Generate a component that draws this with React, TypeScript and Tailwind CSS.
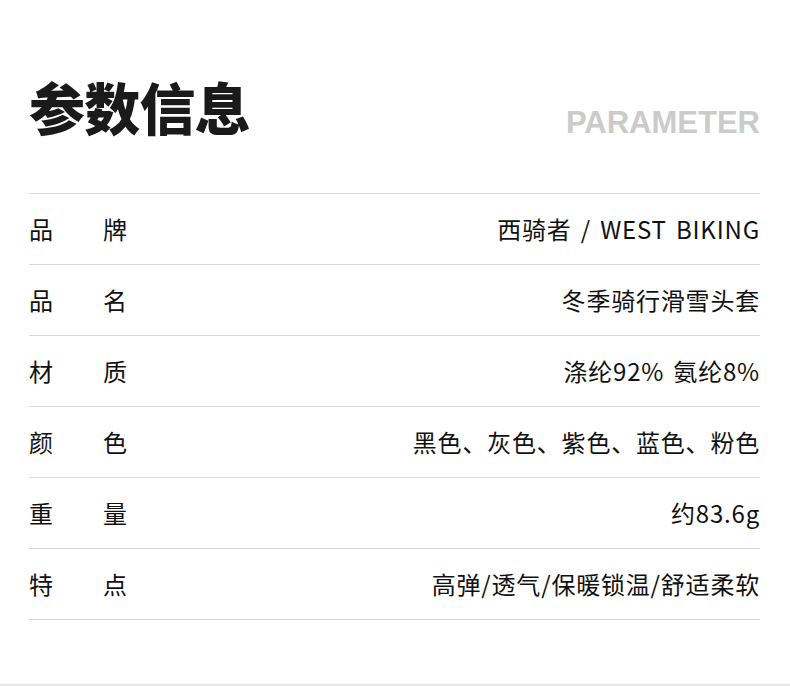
const ROWS: [string, string, string][] = [
  ["品", "牌", "西骑者 / WEST BIKING"],
  ["品", "名", "冬季骑行滑雪头套"],
  ["材", "质", "涤纶92% 氨纶8%"],
  ["颜", "色", "黑色、灰色、紫色、蓝色、粉色"],
  ["重", "量", "约83.6g"],
  ["特", "点", "高弹/透气/保暖锁温/舒适柔软"],
];

export default function App() {
  return (
    <div className="flex h-[686px] w-[790px] flex-col bg-white font-['Noto_Sans_CJK_SC',sans-serif] text-[#111]">
      <div className="flex-1 pl-[29px] pr-[30px] pt-[78px]">
        {/* Header */}
        <div className="flex items-end justify-between">
          <h1 className="text-[56px] font-black leading-none tracking-[-0.75px] text-[#1a1a1a]">
            参数信息
          </h1>
          <span className="-mb-[4px] font-['Liberation_Sans',Arial,sans-serif] text-[31px] font-bold leading-none text-[#cbcbcb]">
            PARAMETER
          </span>
        </div>

        {/* Parameter rows */}
        <div className="mt-[59px] border-t border-[#dadada]">
          {ROWS.map(([a, b, value], i) => (
            <div
              key={i}
              className="flex h-[71px] items-center justify-between border-b border-[#dadada] text-[24px] leading-none"
            >
              <div className="flex">
                <span className="w-[74px]">{a}</span>
                <span>{b}</span>
              </div>
              <span className="tracking-[0.8px] [word-spacing:3px]">{value}</span>
            </div>
          ))}
        </div>
      </div>
      <div className="h-[2px] bg-[#e8e6ef]" />
    </div>
  );
}
